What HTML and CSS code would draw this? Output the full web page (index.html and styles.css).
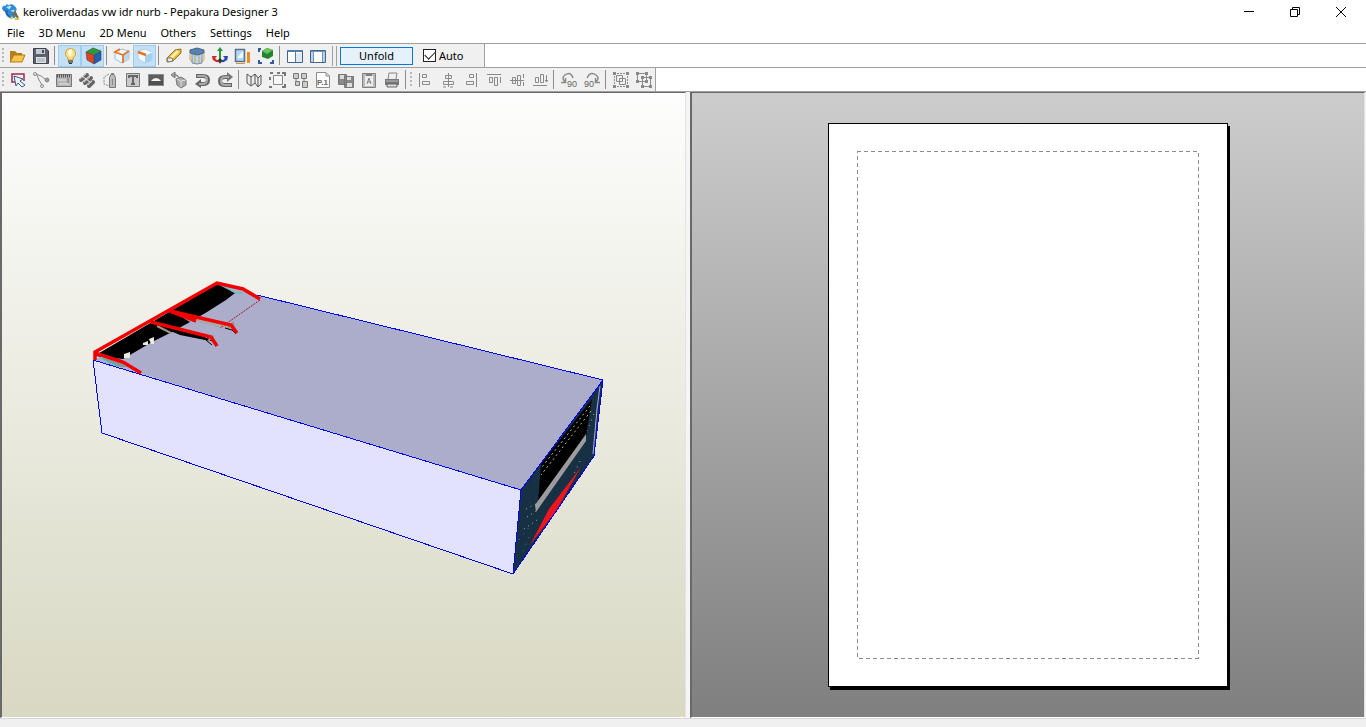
FILE: index.html
```html
<!DOCTYPE html>
<html lang="en">
<head>
<meta charset="utf-8">
<title>keroliverdadas vw idr nurb - Pepakura Designer 3</title>
<link rel="stylesheet" href="styles.css">
</head>
<body>
<header class="titlebar">
  <svg class="logo" viewBox="0 0 16 16" aria-hidden="true">
    <path d="M0 5Q1 1 3 3Q4 0 6 2Q10 0 12 3Q15 5 13 8L14 11L12 14H7Q3 12 3 8Q1 8 0 5Z" fill="#2f8bd6"/>
    <path d="M0 5Q3 8 6 7L5 9Q6 12 9 14L5 12L3 8Z" fill="#185da8"/>
    <path d="M4 4Q7 2 9 3L7 6ZM8 7L12 6L11 9Z" fill="#b5e0ff"/>
    <path d="M10 11L12 9L15 14" fill="none" stroke="#80683d" stroke-width="2"/>
    <path d="M8 15L10 13M12 15H16" stroke="#e0c04b" stroke-width="2"/>
  </svg>
  <h1 class="title">keroliverdadas vw idr nurb - Pepakura Designer 3</h1>
  <div class="window-buttons">
    <button class="window-button" aria-label="Minimize"><svg viewBox="0 0 12 12"><path d="M1 5.500H11" /></svg></button>
    <button class="window-button" aria-label="Restore"><svg viewBox="0 0 12 12"><path d="M1.500 3.500H8.500V10.500H1.500Z M3.500 3.500V1.500H10.500V8.500H8.500"/></svg></button>
    <button class="window-button" aria-label="Close"><svg viewBox="0 0 12 12"><path d="M1 1L11 11M11 1L1 11"/></svg></button>
  </div>
</header>
<nav class="menubar">
  <button class="menu">File</button>
  <button class="menu">3D Menu</button>
  <button class="menu">2D Menu</button>
  <button class="menu">Others</button>
  <button class="menu">Settings</button>
  <button class="menu">Help</button>
</nav>
<div class="toolbar-row">
  <div class="toolbar">
    <span class="grip"></span>
    <button class="tool" aria-label="Open"><svg viewBox="0 0 20 20"><path d="M2 16V5H7L9 7H14V9H6Z" fill="#b97e1c"/><path d="M2 16L6 9H17L14 16Z" fill="#f5c54e" stroke="#b77a15"/></svg></button>
    <button class="tool" aria-label="Save"><svg viewBox="0 0 20 20"><path d="M2.500 2.500H15L17.500 5V17.500H2.500Z" fill="#5c626c" stroke="#3e434c"/><path d="M5 3H14V8H5Z" fill="#c5cbd3"/><path d="M11 4H13V7H11Z" fill="#464c55"/><path d="M5 11H15V17H5Z" fill="#dfe3e8"/><path d="M6 13H14M6 15H14" stroke="#9ba3ad"/></svg></button>
    <span class="separator"></span>
    <button class="tool active" aria-label="Light"><svg viewBox="0 0 20 20"><path d="M8 14V12Q4 9 6 5Q10 0 15 5Q17 9 13 12V14Z" fill="#ffe58a" stroke="#d99a24"/><path d="M8 5Q9 3 12 3L11 10H9Z" fill="#fffde8"/><path d="M8 14H13V17H8Z" fill="#777"/><path d="M9 17.500H12" stroke="#333"/></svg></button>
    <button class="tool active" aria-label="Texture"><svg viewBox="0 0 20 20"><path d="M3 6L10 2L18 5L11 9Z" fill="#2b9c3a"/><path d="M3 6L11 9V18L4 14Z" fill="#e34324"/><path d="M11 9L18 5V14L11 18Z" fill="#235fb3"/><path d="M3 6L11 9L18 5M11 9V18M3 6L4 14L11 18L18 14V5L10 2Z" fill="none" stroke="#354136" stroke-width=".6"/></svg></button>
    <span class="separator"></span>
    <button class="tool" aria-label="Edge line"><svg viewBox="0 0 20 20"><path d="M3 6L10 3L17 5V13L10 17L3 13Z" fill="#eef7ff" stroke="#9fc0da"/><path d="M11 9V17L17 13V5Z" fill="#b4d9f2"/><path d="M8 3L3 6L11 9V17M11 9L17 5" fill="none" stroke="#e87522" stroke-width="1.800"/></svg></button>
    <button class="tool active" aria-label="Fold edge"><svg viewBox="0 0 20 20"><path d="M3 5L10 3L17 6V14L10 17L3 13Z" fill="#f3faff" stroke="#a8cde8"/><path d="M10 9V17L17 14V6Z" fill="#a5d0ee"/><path d="M10 9L17 6" fill="none" stroke="#fff"/><path d="M3 6L11 9" stroke="#e87522" stroke-width="2.500"/></svg></button>
    <span class="separator"></span>
    <button class="tool" aria-label="Edit edges"><svg viewBox="0 0 20 20"><path d="M3 12L11 4L17 3L17 7L9 15L3 16Z" fill="#e6b93a" stroke="#967020"/><path d="M6 11L13 4L15 6L8 13Z" fill="#fff0a2"/><path d="M3 12L8 12L9 15L4 16Z" fill="#f4f0e5" stroke="#777"/></svg></button>
    <button class="tool" aria-label="Flaps"><svg viewBox="0 0 20 20"><path d="M5 7H15V17L10 18L5 17Z" fill="#b5d6f4" stroke="#6c8eb0"/><path d="M3 4L10 2L17 4V7L10 9L3 7Z" fill="#5881ab" stroke="#41678d"/><path d="M3 7V14L6 16M17 7V14L14 16M8 9V17M12 9V17" fill="none" stroke="#d99d3c"/></svg></button>
    <button class="tool" aria-label="Axes"><svg viewBox="0 0 20 20"><path d="M10 14V5" fill="none" stroke="#28993a" stroke-width="2"/><path d="M10 1L13 5H7Z" fill="#28993a"/><path d="M10 15Q5 16 4 12" fill="none" stroke="#cc2b26" stroke-width="2"/><path d="M2 10L7 10L3 15Z" fill="#cc2b26"/><path d="M10 15Q15 16 16 12" fill="none" stroke="#244ba4" stroke-width="2"/><path d="M18 10L13 10L17 15Z" fill="#244ba4"/><path d="M8 14L10 12L12 14L10 18Z" fill="#333"/></svg></button>
    <button class="tool" aria-label="Dimensions"><svg viewBox="0 0 20 20"><path d="M2.500 3.500H11.500V15.500H2.500Z" fill="#b5d7ef" stroke="#59718c" stroke-width="1.500"/><path d="M4 12L10 5V12Z" fill="#eff8ff"/><path d="M14 6H17V17H14Z" fill="#f38b23"/><path d="M3 17.500H12" stroke="#d69340"/></svg></button>
    <button class="tool" aria-label="Fit view"><svg viewBox="0 0 20 20"><path d="M6 5L11 2L17 4V10L12 13L6 11Z" fill="#278330"/><path d="M6 5L11 8L17 4L11 2Z" fill="#6cc35f"/><path d="M2 3H5M3 3V6M3 14V17H6M14 17H17V14" fill="none" stroke="#315b9f" stroke-width="2"/></svg></button>
    <span class="separator"></span>
    <button class="tool" aria-label="Two panes"><svg viewBox="0 0 20 20"><path d="M2.500 4.500H17.500V16.500H2.500Z" fill="#fff" stroke="#3f6592"/><path d="M3 4H17V6H3Z" fill="#537da7"/><path d="M10.500 5V16" stroke="#537da7"/><path d="M11 7H17V16H11Z" fill="#dceaf2"/></svg></button>
    <button class="tool" aria-label="One pane"><svg viewBox="0 0 20 20"><path d="M2.500 4.500H17.500V16.500H2.500Z" fill="#b9d2e6" stroke="#3f6592"/><path d="M6 6H14V16H6Z" fill="#fff"/><path d="M3 5.500H17M5.500 5V16M14.500 5V16" stroke="#7196b8"/></svg></button>
    <span class="split"></span>
    <button class="unfold">Unfold</button>
    <label class="auto"><input type="checkbox" class="check" checked>Auto</label>
  </div>
</div>
<div class="toolbar-row">
  <div class="toolbar">
    <span class="grip"></span>
    <button class="tool" aria-label="Select"><svg viewBox="0 0 20 20"><path d="M8 12H4V4H16V11" fill="none" stroke="#a32945" stroke-width="1.500"/><path d="M6 6L15 9L12 11L17 15L14 17L10 13L8 16Z" fill="#e8f2fb" stroke="#3d5c8d"/></svg></button>
    <button class="tool" aria-label="Join edges"><svg viewBox="0 0 20 20" class="gray-line"><path d="M5 4L10 6L14 9M6 5L8 10L11 15"/><circle cx="4" cy="4" r="1.500"/><circle cx="11" cy="16" r="1.500"/><circle cx="16" cy="10" r="2" fill="#999"/></svg></button>
    <button class="tool" aria-label="Ruler"><svg viewBox="0 0 20 20"><path d="M2.500 4.500H17.500V16.500H2.500Z" fill="#b5b5b5" stroke="#777"/><path d="M3 6H17" stroke="#555" stroke-width="3" stroke-dasharray="1 1"/><path d="M4 10H12M5 14H15" stroke="#e5e5e5"/><path d="M14 8V13" stroke="#777"/></svg></button>
    <button class="tool" aria-label="Edge color"><svg viewBox="0 0 20 20"><g stroke="#666" stroke-width="4" stroke-linecap="round"><path d="M4 10L10 5M8 13L14 8M12 16L16 12"/></g><g stroke="#ccc" stroke-width="1"><path d="M3 9L9 4M7 12L13 7M11 15L15 11"/></g><path d="M5 6L9 9M9 9L13 12" stroke="#eee"/></svg></button>
    <button class="tool" aria-label="Edge flap"><svg viewBox="0 0 20 20" class="gray-line"><path d="M9 4L4 7V14L9 16" stroke-dasharray="2 1"/><path d="M9.500 7.500L11 4.500H14L15.500 7.500V17.500H9.500Z" fill="#bbb" stroke="#777"/><path d="M11 3.500H14M12.500 9V15"/></svg></button>
    <button class="tool" aria-label="Text"><svg viewBox="0 0 20 20"><path d="M3.500 3.500H16.500V16.500H3.500Z" fill="#c9c9c9" stroke="#777"/><path d="M6 8V6H14V8M10 6V14M8 14H12" fill="none" stroke="#666" stroke-width="2"/></svg></button>
    <button class="tool" aria-label="Image"><svg viewBox="0 0 20 20"><path d="M2 4H18V16H2Z" fill="#888"/><path d="M3 5H17V11H3Z" fill="#5f5f5f"/><path d="M5 11Q7 8 10 8T15 11Z" fill="#f4f4f4"/><path d="M3 11H17V15H3Z" fill="#505050"/></svg></button>
    <button class="tool" aria-label="Solid"><svg viewBox="0 0 20 20"><path d="M7 9L12 7L17 10V15L12 18L8 15Z" fill="#aaa" stroke="#777"/><path d="M8 9L12 11L17 10M12 11V17" fill="none" stroke="#ddd"/><path d="M10 8Q9 4 5 5M2 5L6 2V8Z" fill="#aaa" stroke="#777"/></svg></button>
    <button class="tool" aria-label="Undo"><svg viewBox="0 0 20 20"><path d="M4 6H11Q16 6 16 10T11 14H8" fill="none" stroke="#666" stroke-width="4"/><path d="M9 9L3 14L9 18Z" fill="#666"/><path d="M5 6H11Q15 6 15 10T10 14H7" fill="none" stroke="#aaa" stroke-width="2"/></svg></button>
    <button class="tool" aria-label="Redo"><svg viewBox="0 0 20 20"><path d="M17 15H10Q5 15 5 11T10 7H13" fill="none" stroke="#666" stroke-width="4"/><path d="M12 2L18 7L12 12Z" fill="#777"/><path d="M16 15H10Q6 15 6 11T10 7H14" fill="none" stroke="#aaa" stroke-width="2"/></svg></button>
    <span class="separator"></span>
    <button class="tool" aria-label="Fold view"><svg viewBox="0 0 20 20"><path d="M3 4L7 7V16L3 13ZM7 7L11 4V13L7 16M11 4L14 8V17L11 13M14 8L17 5V14L14 17" fill="#eee" stroke="#555"/></svg></button>
    <button class="tool" aria-label="Select bounds"><svg viewBox="0 0 20 20" class="gray-line"><path d="M6.500 5.500H15.500V14.500H6.500Z" fill="#f7f7f7"/><path d="M3 3H6M10 3H13M3 7V10M15 3H18V6M2 17H5M15 17H18V14" stroke="#777" stroke-width="2"/></svg></button>
    <button class="tool" aria-label="Arrange parts"><svg viewBox="0 0 20 20"><path d="M3.500 3.500H8.500V8.500H3.500ZM11.500 3.500H16.500V8.500H11.500ZM5.500 11.500H9.500V15.500H5.500ZM12.500 11.500H17.500V17.500H12.500Z" fill="#ccc" stroke="#777"/><path d="M6 9V11M14 9V11" stroke="#777"/></svg></button>
    <button class="tool" aria-label="Page number"><svg viewBox="0 0 20 20" class="gray-line"><path d="M3.500 2.500H13L16.500 6V17.500H3.500Z" fill="#fff"/><path d="M13 3V6H16"/><text class="page-glyph" x="4" y="15">P.1</text></svg></button>
    <button class="tool" aria-label="Export"><svg viewBox="0 0 20 20"><path d="M2.500 4.500H10.500V14.500H2.500ZM8.500 6.500H17.500V17.500H8.500Z" fill="#888" stroke="#777"/><path d="M4 5H8V9H4ZM11 7H15V10H11ZM11 13H16V17H11Z" fill="#ddd"/></svg></button>
    <button class="tool" aria-label="Clipboard"><svg viewBox="0 0 20 20"><path d="M3.500 3.500H16.500V17.500H3.500Z" fill="#bbb" stroke="#808080"/><path d="M6 6H14V16H6Z" fill="#eee"/><path d="M7 3H13V6H7Z" fill="#808080"/><path d="M8 14L10 8L12 14M8 12H12" fill="none" stroke="#808080"/></svg></button>
    <button class="tool" aria-label="Print"><svg viewBox="0 0 20 20"><path d="M6 9L7 3H15L14 9" fill="#eee" stroke="#888"/><path d="M3 9H17V15H3Z" fill="#777"/><path d="M4 11H16" stroke="#bbb"/><path d="M5 14H15V17H5Z" fill="#ddd" stroke="#666"/></svg></button>
    <span class="separator"></span>
    <span class="grip"></span>
    <button class="tool" aria-label="Align left"><svg viewBox="0 0 20 20" class="gray-line"><path d="M4.500 3V17M7.500 4.500H11.500V7.500H7.500ZM7.500 11.500H14.500V14.500H7.500Z"/></svg></button>
    <button class="tool" aria-label="Align center"><svg viewBox="0 0 20 20" class="gray-line"><path d="M10.500 3V17M7.500 5.500H13.500V8.500H7.500ZM5.500 11.500H15.500V14.500H5.500ZM5 17H8M12 17H15"/></svg></button>
    <button class="tool" aria-label="Align right"><svg viewBox="0 0 20 20" class="gray-line"><path d="M15.500 3V17M8.500 4.500H12.500V7.500H8.500ZM5.500 11.500H12.500V14.500H5.500Z"/></svg></button>
    <button class="tool" aria-label="Align top"><svg viewBox="0 0 20 20" class="gray-line"><path d="M3 4.500H17M5.500 7.500H8.500V12.500H5.500ZM10.500 7.500H13.500V15.500H10.500ZM16.500 7V13"/></svg></button>
    <button class="tool" aria-label="Align middle"><svg viewBox="0 0 20 20" class="gray-line"><path d="M3 10.500H17M5.500 7.500H8.500V13.500H5.500ZM10.500 5.500H13.500V15.500H10.500ZM16.500 4V8M16.500 12V16"/></svg></button>
    <button class="tool" aria-label="Align bottom"><svg viewBox="0 0 20 20" class="gray-line"><path d="M3 15.500H17M5.500 7.500H8.500V12.500H5.500ZM10.500 4.500H13.500V12.500H10.500ZM16.500 5V12M15 10L16.500 12L18 10"/></svg></button>
    <span class="separator"></span>
    <button class="tool" aria-label="Rotate left 90 degrees"><svg viewBox="0 0 20 20" class="gray-line"><path d="M6 12Q2 8 6 5Q12 1 14 8M2 12.500H6.500V8" stroke-width="1.500"/><text class="rotate-glyph" x="8" y="17">90</text></svg></button>
    <button class="tool" aria-label="Rotate right 90 degrees"><svg viewBox="0 0 20 20" class="gray-line"><path d="M14 12Q18 8 14 5Q8 1 5 8M18 12.500H13.500V8" stroke-width="1.500"/><text class="rotate-glyph" x="2" y="17">90</text></svg></button>
    <span class="separator"></span>
    <button class="tool" aria-label="Group"><svg viewBox="0 0 20 20" class="gray-line"><path d="M6 3.500H14M6 16.500H14M3.500 6V14M16.500 6V14" stroke-dasharray="2 1"/><path d="M5.500 5.500H11.500V11.500H5.500ZM8.500 8.500H14.500V14.500H8.500Z"/><path class="handles" d="M2 2H5V5H2ZM15 2H18V5H15ZM2 15H5V18H2ZM15 15H18V18H15Z"/></svg></button>
    <button class="tool" aria-label="Ungroup"><svg viewBox="0 0 20 20" class="gray-line"><path d="M3.500 3.500H12.500V11.500H3.500ZM8.500 7.500H16.500V16.500H8.500Z"/><path class="handles" d="M2 2H5V5H2ZM11 2H14V5H11ZM2 10H5V13H2ZM7 15H10V18H7ZM15 15H18V18H15ZM15 6H18V9H15ZM11 10H14V13H11ZM7 6H10V9H7Z"/></svg></button>
  </div>
</div>
<main class="workspace">
  <section class="pane model-pane" aria-label="3D view">
    <svg class="model" viewBox="2 93 683 624">
      <path d="M94 360L217 283L257 295L603 380L521 490L141 374Z" fill="#acaccb"/>
      <path d="M93 360L521 490L513 574L102 433Z" fill="#e2e2ff"/>
      <path d="M603 380L521 490L513 574L594 456Z" fill="#183044"/>
      <path d="M592 399L586 436L538 503L541 464Z" fill="#000"/>
      <path d="M586 434V441L536 512L535 505Z" fill="#9c9c9e"/>
      <path d="M581 467L549 509L530 545L556 511Z" fill="#ee151d"/>
      <g fill="none" stroke="#b6b987" stroke-width="1" stroke-dasharray="2 3">
        <path d="M590 406L542 467M591 411L541 475"/>
        <path d="M594 414L587 431M580 461L574 474" stroke-dasharray="1 5"/>
        <path d="M526 509L538 503M527 517L539 509M524 529L540 518" stroke-dasharray="1 4"/>
        <path d="M519 540L530 526M523 551L530 535" stroke="#2c8a9c" stroke-dasharray="1 6"/>
      </g>
      <path d="M600 386L597 409L593 454" fill="none" stroke="#acacea"/>
      <path d="M94 356L217 284L235 293L226 300L207 312L190 322L170 333L152 342L135 352L123 359Z" fill="#000"/>
      <path d="M222 285L235 293L243 293" fill="none" stroke="#36d0b2" stroke-width="1"/>
      <path d="M101 358L116 367H130L122 361Z" fill="#83999b"/>
      <path d="M100 358L118 367" stroke="#45d7c6"/>
      <path d="M124 354L130 352V358H124ZM143 343L148 341V345H143ZM149 339L154 337V344H151Z" fill="#eaeadd"/>
      <path d="M172 311L190 322L229 330L236 325Z" fill="#acaccb"/>
      <path d="M184 318L229 330L233 325L190 316Z" fill="#aaa8a4"/>
      <path d="M152 323L180 335L210 341L215 341L199 335Z" fill="#000"/>
      <path d="M157 326L171 333" stroke="#9f9585" stroke-width="2"/>
      <path d="M208 341L213 337L214 344M228 328L233 323L235 332" fill="none" stroke="#9a9580" stroke-width="2"/>
      <path d="M206 340L212 345M225 328L232 330L236 334" fill="none" stroke="#000"/>
      <path d="M260 300L220 328" fill="none" stroke="#a51530" stroke-dasharray="2 1"/>
      <g fill="none" stroke="#0000f3" stroke-width="1" shape-rendering="crispEdges">
        <path d="M93 360L102 433L513 574L594 456L603 380L257 295M93 360L521 490L603 380M521 490L513 574"/>
      </g>
      <path d="M95 360V352L217 283L243 289L260 299M95 353L123 362L141 373M151 322L211 337L217 346M170 311L231 325L237 333M170 311L196 321" fill="none" stroke="#f20000" stroke-width="3.500"/>
    </svg>
  </section>
  <section class="pane page-pane" aria-label="2D view">
    <div class="paper">
      <svg class="print-area" aria-hidden="true"><rect width="100%" height="100%"/></svg>
    </div>
  </section>
</main>
<footer class="statusbar"></footer>
</body>
</html>
```
FILE: styles.css
```css
* {
  box-sizing: border-box;
}

body {
  display: flex;
  flex-direction: column;
  height: 100vh;
  margin: 0;
  overflow: hidden;
  background: #fff;
  color: #000;
  font: 11px/16px "Noto Sans", "Open Sans", sans-serif;
}

button {
  margin: 0;
  padding: 0;
  border: 0;
  background: transparent;
  color: inherit;
  font: inherit;
}

.titlebar {
  display: flex;
  align-items: center;
  flex: none;
  height: 23px;
  padding-left: 2px;
}

.logo {
  width: 17px;
  height: 17px;
  margin-right: 4px;
}

.title {
  margin: 0;
  font-size: 11px;
  font-weight: 400;
}

.window-buttons {
  display: flex;
  margin-left: auto;
  padding-right: 2px;
}

.window-button {
  display: grid;
  place-items: center;
  width: 46px;
  height: 20px;
}

.window-button svg {
  width: 12px;
  height: 12px;
  fill: none;
  stroke: #000;
}

.menubar {
  display: flex;
  flex: none;
  height: 21px;
  padding-bottom: 1px;
  border-bottom: 1px solid #a0a0a0;
}

.menu {
  padding: 0 7px;
}

.toolbar-row {
  display: flex;
  flex: none;
  height: 24px;
  border-bottom: 1px solid #a0a0a0;
}

.toolbar {
  display: flex;
  align-items: center;
  border-right: 1px solid #a0a0a0;
  background: #f0f0f0;
}

.grip {
  width: 2px;
  height: 16px;
  margin: 0 2px;
  background: repeating-linear-gradient(#b8b8b8 0 2px, transparent 2px 4px);
}

.separator + .grip {
  margin: 0 1px;
}

.tool {
  display: grid;
  place-items: center;
  width: 23px;
  height: 22px;
}

.tool svg {
  width: 20px;
  height: 20px;
}

.active {
  border: 1px solid #99cdf5;
  background: #c3e0f7;
}

.separator {
  width: 1px;
  height: 19px;
  margin: 0 3px 0 2px;
  background: #8c8c8c;
}

.gray-line {
  fill: none;
  stroke: #8a8a8a;
}

.gray-line text {
  fill: #666;
  stroke: none;
}

.page-glyph {
  font: bold 8px "Liberation Sans", sans-serif;
}

.rotate-glyph {
  font: 9px "Liberation Sans", sans-serif;
}

.handles {
  fill: #8a8a8a;
  stroke: none;
}

.split {
  width: 5px;
  height: 20px;
  margin: 0 3px;
  border: solid #a0a0a0;
  border-width: 0 1px;
}

.unfold {
  width: 73px;
  height: 18px;
  border: 1px solid #0078d7;
  background: #e5f1fb;
}

.auto {
  display: flex;
  align-items: center;
  gap: 3px;
  padding: 0 21px 0 10px;
}

.check {
  appearance: none;
  width: 13px;
  height: 13px;
  margin: 0;
  border: 1px solid #222;
  background: #fff;
}

.check:checked::before {
  display: block;
  width: 9px;
  height: 5px;
  margin: 1px;
  border: solid #222;
  border-width: 0 0 1px 1px;
  content: "";
  transform: rotate(-45deg);
}

.workspace {
  display: grid;
  flex: 1;
  grid-template-columns: 686fr 675fr;
  gap: 4px;
  min-height: 0;
  padding-right: 1px;
  background: #f5f5f5;
}

.pane {
  min-width: 0;
  min-height: 0;
  border: 1px solid;
  border-color: #696969 #e3e3e3 #fff #696969;
}

.model-pane {
  border-left-width: 2px;
  background: linear-gradient(#fdfdfd, #d8d8c3);
}

.model {
  display: block;
  width: 100%;
  height: 100%;
}

.page-pane {
  display: flex;
  justify-content: center;
  padding: 30px;
  border-left-width: 2px;
  background: linear-gradient(#cdcdcd, #7f7f7f);
}

.paper {
  height: 100%;
  padding: 27px 29px 28px 28px;
  border: 1px solid #000;
  background: #fff;
  box-shadow: 2px 3px #000;
  aspect-ratio: 400 / 564;
}

.print-area {
  display: block;
  width: 100%;
  height: 100%;
  overflow: visible;
}

.print-area rect {
  fill: none;
  stroke: #8c8c8c;
  stroke-dasharray: 4 3;
  shape-rendering: crispEdges;
}

.statusbar {
  flex: none;
  height: 9px;
  border-top: 1px solid #d7d7d7;
  background: #f0f0f0;
}
```
